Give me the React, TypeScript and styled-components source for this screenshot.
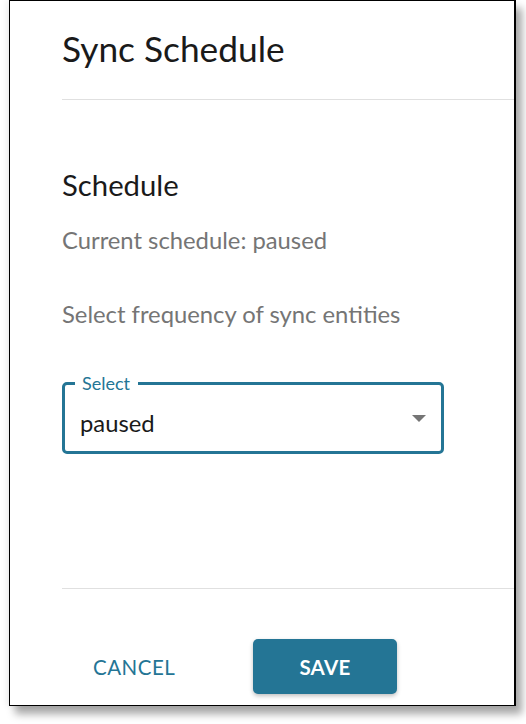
import React from "react";
import styled, { createGlobalStyle } from "styled-components";

const teal = "#247595";

const GlobalStyle = createGlobalStyle`
  html, body { margin: 0; padding: 0; background: #ffffff; }
  body { font-family: Lato, "Open Sans", sans-serif; }
  * { box-sizing: border-box; }
`;

const Page = styled.div`
  width: 526px;
  height: 724px;
  padding-left: 9px;
  overflow: hidden;
`;

const Card = styled.div`
  width: 507px;
  height: 706px;
  background: #fff;
  border: 1px solid #000;
  border-right-width: 2px;
  box-shadow: 6px 8px 8px rgba(0, 0, 0, 0.35), -3px 0 6px rgba(0, 0, 0, 0.06);
  display: flex;
  flex-direction: column;
  padding-left: 52px;
`;

const Header = styled.div`
  height: 99px;
  display: flex;
  align-items: flex-start;
  padding-top: 26px;
  border-bottom: 1px solid #e0e0e0;
`;

const Title = styled.h1`
  margin: 0;
  font-size: 35.3px;
  font-weight: 400;
  color: #1a1a1a;
  line-height: 44px;
`;

const Content = styled.div`
  flex: 1;
  display: flex;
  flex-direction: column;
  border-bottom: 1px solid #e0e0e0;
  padding-top: 67px;
`;

const Heading = styled.h2`
  margin: 0;
  font-size: 29.3px;
  font-weight: 400;
  color: #1a1a1a;
  line-height: 36px;
`;

const Note = styled.p<{ $gap: number }>`
  margin: ${(p) => p.$gap}px 0 0;
  font-size: 23.8px;
  color: #757575;
  line-height: 30px;
`;

const Field = styled.div`
  position: relative;
  margin-top: 53px;
  width: 382px;
  height: 72px;
  border: 3px solid ${teal};
  border-radius: 5px;
  padding: 0 15px;
  display: flex;
  align-items: center;
`;

const Label = styled.span`
  position: absolute;
  top: -12px;
  left: 10px;
  background: #fff;
  padding: 0 8px 0 7px;
  font-size: 18px;
  line-height: 20px;
  color: ${teal};
`;

const Value = styled.span`
  flex: 1;
  padding-top: 10px;
  font-size: 23.8px;
  line-height: 30px;
  color: #1a1a1a;
`;

const Arrow = styled.svg`
  width: 14px;
  height: 7px;
`;

const Actions = styled.div`
  flex: none;
  height: 116px;
  display: flex;
  align-items: flex-start;
  padding-left: 31px;
  padding-top: 50px;
`;

const TextButton = styled.button`
  background: none;
  border: none;
  padding: 0;
  height: 55px;
  width: 160px;
  font-family: inherit;
  font-size: 20.5px;
  letter-spacing: 0.5px;
  color: ${teal};
  text-transform: uppercase;
  text-align: left;
`;

const FilledButton = styled.button`
  background: ${teal};
  border: none;
  border-radius: 5px;
  width: 144px;
  height: 55px;
  font-family: inherit;
  font-size: 20.5px;
  font-weight: 700;
  letter-spacing: 0.3px;
  color: #fff;
  text-transform: uppercase;
  box-shadow: 0 2px 4px rgba(0, 0, 0, 0.25);
`;

export default function App() {
  return (
    <>
      <GlobalStyle />
      <Page>
        <Card>
          <Header>
            <Title>Sync Schedule</Title>
          </Header>
          <Content>
            <Heading>Schedule</Heading>
            <Note $gap={22}>Current schedule: paused</Note>
            <Note $gap={44}>Select frequency of sync entities</Note>
            <Field>
              <Label>Select</Label>
              <Value>paused</Value>
              <Arrow viewBox="0 0 14 7">
                <path d="M0 0 L14 0 L7 7 Z" fill="#757575" />
              </Arrow>
            </Field>
          </Content>
          <Actions>
            <TextButton>Cancel</TextButton>
            <FilledButton>Save</FilledButton>
          </Actions>
        </Card>
      </Page>
    </>
  );
}
